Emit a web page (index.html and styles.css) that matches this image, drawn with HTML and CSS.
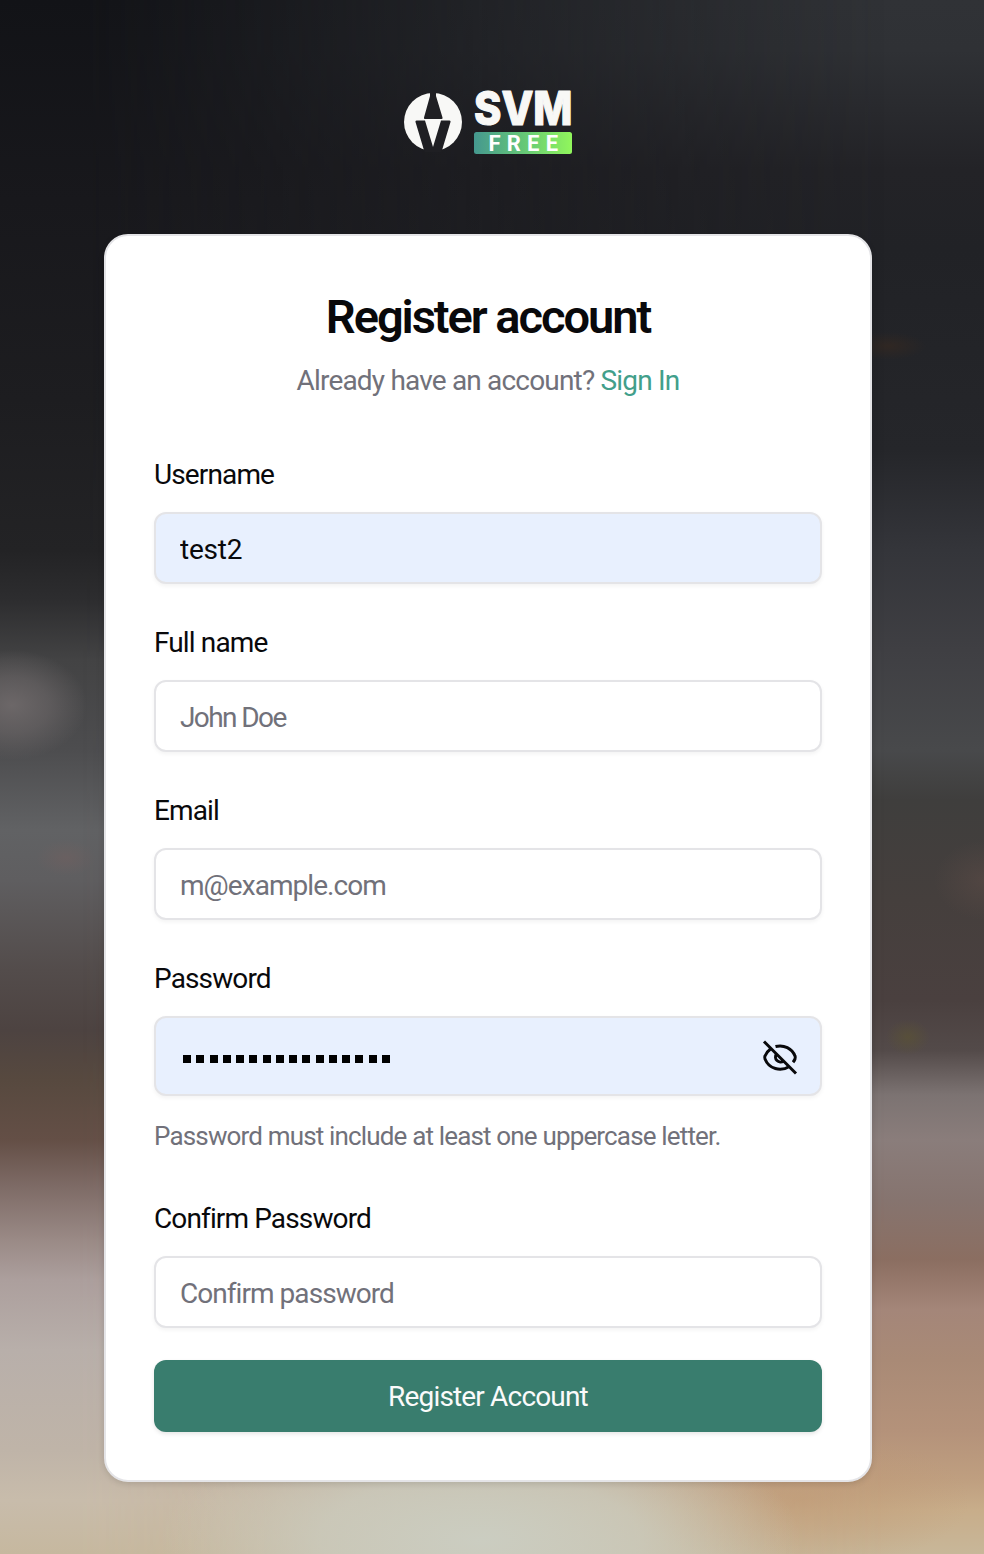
FILE: index.html
```html
<!DOCTYPE html>
<html lang="en">
<head>
<meta charset="utf-8">
<title>Register account</title>
<link rel="stylesheet" href="styles.css">
</head>
<body>
<main class="page">
  <svg class="logo" width="170" height="66" viewBox="0 0 170 66" role="img" aria-label="SVM Free">
    <defs>
      <linearGradient id="badge"><stop offset="0" stop-color="#45988f"/><stop offset=".5" stop-color="#65c777"/><stop offset="1" stop-color="#91f65c"/></linearGradient>
    </defs>
    <circle cx="29" cy="32" r="29" fill="#f8f8f6"/>
    <path fill="#1f1f23" d="M26 2h6v4l6.500 21.500q.4 1.500-1 1.500H21q-1.400 0-1-1.500L26 6z"/>
    <path fill="#1f1f23" d="M12.500 30.500H21L29 57l8-26.500h8.500q1.500 0 1 1.500L37.500 62H20.500l-9-30q-.5-1.500 1-1.500z"/>
    <text class="logo-name" x="70" y="34.500" textLength="98.500" lengthAdjust="spacingAndGlyphs">SVM</text>
    <rect x="70" y="42" width="98" height="22" rx="2.500" fill="url(#badge)"/>
    <text class="logo-tier" x="84.500" y="61" textLength="69.500" lengthAdjust="spacing">FREE</text>
  </svg>
  <form class="card">
    <h1 class="title">Register account</h1>
    <p class="subtitle">Already have an account? <a class="link">Sign In</a></p>
    <div class="field">
      <label class="label">Username</label>
      <input class="input filled username" value="test2">
    </div>
    <div class="field">
      <label class="label">Full name</label>
      <input class="input full-name" placeholder="John Doe">
    </div>
    <div class="field">
      <label class="label">Email</label>
      <input class="input" placeholder="m@example.com">
    </div>
    <div class="field">
      <label class="label">Password</label>
      <div class="input filled password">
        <span class="mask"><i></i><i></i><i></i><i></i><i></i><i></i><i></i><i></i><i></i><i></i><i></i><i></i><i></i><i></i><i></i><i></i></span>
        <svg class="eye" width="36" height="36" viewBox="0 0 36 36" fill="none" stroke="#09090b" stroke-width="3" stroke-linecap="butt">
          <path d="M2 2.500l32 32M13.500 7.500C22 5.300 30 9.500 33 17q.7 1.500 0 3-.8 1.800-2 3.300M8.500 10Q4.800 12.700 3 17q-.7 1.500 0 3C7 30 18.500 33 27.500 27.500M14.500 15a5 5 0 0 0 7 7"/>
        </svg>
      </div>
      <p class="hint">Password must include at least one uppercase letter.</p>
    </div>
    <div class="field">
      <label class="label">Confirm Password</label>
      <input class="input" placeholder="Confirm password">
    </div>
    <button class="submit" type="button">Register Account</button>
  </form>
</main>
</body>
</html>
```
FILE: styles.css
```css
* { box-sizing: border-box; }
body {
  margin: 0;
  font-family: Roboto, "Open Sans", sans-serif;
  color: #09090b;
}
.page {
  position: relative;
  isolation: isolate;
  overflow: hidden;
  height: 1554px;
  padding-top: 90px;
  display: flex;
  flex-direction: column;
  align-items: center;
  padding-right: 8px;
  background:
    radial-gradient(ellipse 38px 14px at 888px 346px, #38291f99, #38291f00),
    radial-gradient(ellipse 22px 18px at 908px 1037px, #5c543299, #5c543200),
    radial-gradient(ellipse 50px 40px at 984px 880px, #65504a66, #65504a00),
    linear-gradient(#303236 0, #2f3135 50px, #292a2e 110px, #232327 170px, #212226 250px, #232428 350px, #25262a 450px, #34353a 550px, #3f3f43 650px, #48494b 750px, #3f3e3d 800px, #453f3d 900px, #4a403f 1000px, #534a49 1050px, #7c7372 1095px, #8a7d7b 1140px, #86746f 1200px, #8b6e61 1260px, #a48679 1310px, #a98a76 1360px, #b4927a 1430px, #bf9f80 1480px, #c8ad8a 1510px, #c8b799 1554px);
}
.page::before {
  content: "";
  position: absolute;
  z-index: -1;
  inset: 0;
  background:
    radial-gradient(ellipse 75px 55px at 12px 705px, #6c6768, #6c676899 50%, #6c676800),
    radial-gradient(ellipse 30px 18px at 66px 858px, #6e6060aa, #6e606000),
    linear-gradient(#121317 0, #18181c 200px, #1d1d20 400px, #232325 550px, #2d2d2f 600px, #434344 660px, #4d4d4f 750px, #616264 830px, #5f5e60 880px, #534c4b 970px, #4d4341 1030px, #57493f 1080px, #644f46 1140px, #7d6a65 1185px, #9a8a86 1240px, #ac9f9d 1280px, #b8afaa 1350px, #bfb4a8 1450px, #c8bcab 1500px, #c6b89f 1554px);
  mask-image: linear-gradient(90deg, #000 8%, transparent 90%);
}
.page::after {
  content: "";
  position: absolute;
  z-index: -1;
  inset: 1400px 0 0;
  background:
    radial-gradient(ellipse 320px 130px at 480px 140px, #cbcdc1, #cbcdc1bb 50%, #cbcdc100),
    radial-gradient(ellipse 170px 70px at 800px 100px, #bf967088, #bf967000);
}
.logo { flex: none; margin-right: -2px; overflow: visible; }
.logo-name {
  font: 800 46px Inter, sans-serif;
  fill: #f8f8f6;
  stroke: #f8f8f6;
  stroke-width: 1.200px;
  stroke-linejoin: round;
}
.logo-tier { font: 700 22px Roboto, sans-serif; fill: #fff; }
.card {
  display: flex;
  flex-direction: column;
  width: 768px;
  height: 1248px;
  margin-top: 78px;
  padding: 48px;
  border: 2px solid #e4e4e7;
  border-radius: 24px;
  background: #fff;
  box-shadow: 0 2px 6px rgb(0 0 0 / .12);
}
.title {
  margin: 3px 0 0;
  text-align: center;
  font-size: 47px;
  line-height: 60px;
  font-weight: 600;
  letter-spacing: -2.050px;
}
.subtitle {
  margin: 16px 0 33px;
  text-align: center;
  font-size: 28px;
  line-height: 36px;
  color: #71717a;
  letter-spacing: -.82px;
}
.link { color: #429f8b; }
.field { margin-top: 28px; margin-bottom: 16px; }
.label {
  display: block;
  width: max-content;
  padding-top: 1px;
  font-size: 28px;
  line-height: 28px;
  letter-spacing: -.87px;
  margin-bottom: 23px;
}
.input {
  display: block;
  width: 100%;
  height: 72px;
  padding: 2px 24px 0;
  border: 2px solid #e4e4e7;
  border-radius: 12px;
  background: #fff;
  box-shadow: 0 2px 4px rgb(0 0 0 / .05);
  font: 28px Roboto, "Open Sans", sans-serif;
  letter-spacing: -.95px;
  color: #09090b;
}
.input::placeholder { color: #71717a; opacity: 1; }
.username { letter-spacing: -.2px; }
.full-name { letter-spacing: -1.600px; }
.filled { background: #e8f0fe; }
.password {
  display: flex;
  align-items: center;
  justify-content: space-between;
  height: 80px;
  padding: 2px 22px 0 27px;
}
.mask { display: flex; gap: 5.270px; padding-top: 4px; }
.mask i { width: 8px; height: 8px; background: #000; }
.hint {
  margin: 20px 0 4px;
  font-size: 26px;
  line-height: 40px;
  letter-spacing: -.84px;
  color: #71717a;
}
.submit {
  flex: none;
  height: 72px;
  margin-top: 16px;
  border: 0;
  border-radius: 12px;
  background: #397d6e;
  color: #fafafa;
  font: 28px Roboto, "Open Sans", sans-serif;
  letter-spacing: -.83px;
  box-shadow: 0 2px 4px rgb(0 0 0 / .1);
}
```
